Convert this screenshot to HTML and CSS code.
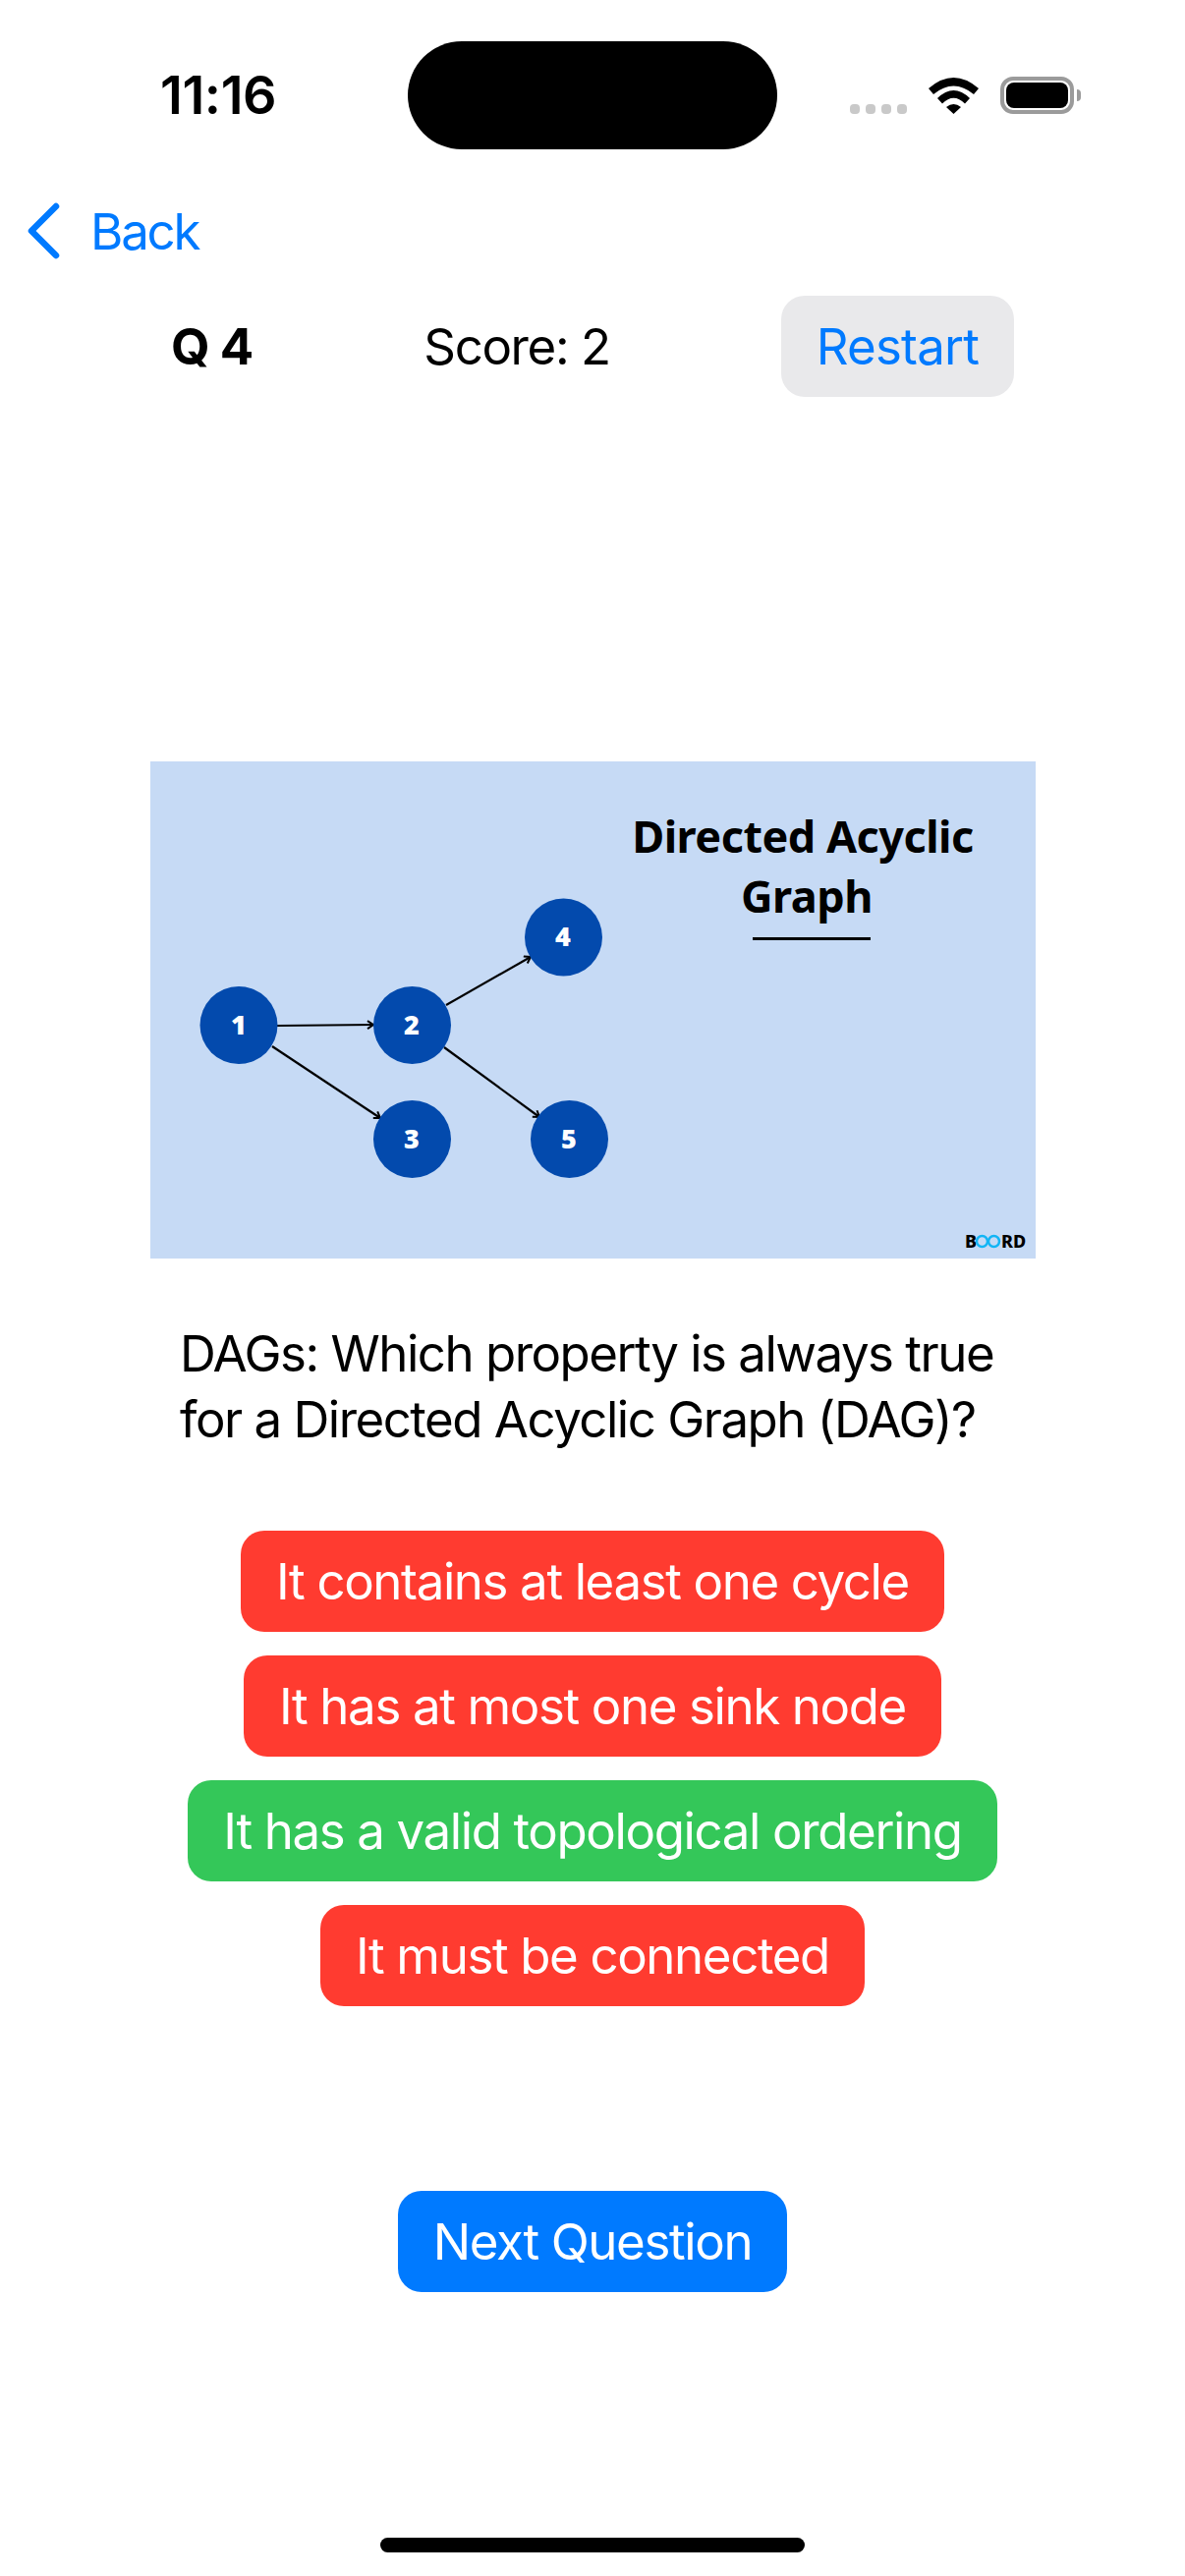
FILE: index.html
```html
<!DOCTYPE html>
<html lang="en">
<head>
<meta charset="utf-8">
<title>Quiz</title>
<link rel="stylesheet" href="styles.css">
</head>
<body>
<div class="page">
  <header class="status">
    <span class="time">11:16</span>
    <div class="island"></div>
    <div class="indicators">
      <div class="dots"><i></i><i></i><i></i><i></i></div>
      <svg class="wifi" width="51" height="37" viewBox="0 0 51 37"><path d="M0 11Q25.500 -11 51 11L46 17Q25.500 0 5 17Z"/><path d="M9 21Q25.500 5 42 21L37 26.500Q25.500 15 14 26.500Z"/><path d="M18 30Q25.500 24 33 30L25.500 37Z"/></svg>
      <div class="battery"><div class="charge"></div></div>
      <div class="cap"></div>
    </div>
  </header>
  <nav class="nav">
    <svg class="chevron" width="36" height="58" viewBox="0 0 36 58"><path d="M31 4L6 29L31 54"/></svg>
    <span class="back">Back</span>
  </nav>
  <section class="hud">
    <strong class="qnum">Q 4</strong>
    <span class="score">Score: 2</span>
    <button class="restart">Restart</button>
  </section>
  <svg class="figure" width="901" height="506" viewBox="153 775 901 506">
    <rect class="fig-bg" x="153" y="775" width="901" height="506"/>
    <defs><marker id="head" markerWidth="10" markerHeight="10" refX="8" refY="5" orient="auto" markerUnits="userSpaceOnUse"><path class="head" d="M2 1L8 5L2 9"/></marker></defs>
    <line class="edge" x1="282" y1="1044" x2="380" y2="1043" marker-end="url(#head)"/>
    <line class="edge" x1="277" y1="1065" x2="387" y2="1138" marker-end="url(#head)"/>
    <line class="edge" x1="454" y1="1023" x2="540" y2="974" marker-end="url(#head)"/>
    <line class="edge" x1="452" y1="1066" x2="549" y2="1137" marker-end="url(#head)"/>
    <circle class="node" cx="243" cy="1043.500" r="39.500"/><text class="num" x="243" y="1053">1</text>
    <circle class="node" cx="419.500" cy="1043.500" r="39.500"/><text class="num" x="419" y="1053">2</text>
    <circle class="node" cx="419.500" cy="1159.500" r="39.500"/><text class="num" x="419" y="1169">3</text>
    <circle class="node" cx="573.500" cy="954" r="39.500"/><text class="num" x="573" y="963">4</text>
    <circle class="node" cx="579.500" cy="1159.500" r="39.500"/><text class="num" x="579" y="1169">5</text>
    <text class="fig-title" x="817" y="868">Directed Acyclic</text>
    <text class="fig-title" x="821" y="929">Graph</text>
    <rect x="766" y="954" width="120" height="3"/>
    <text class="logo" x="982" y="1270">B</text>
    <circle class="loop" cx="999.500" cy="1263.500" r="5.500"/><circle class="loop" cx="1011.500" cy="1263.500" r="5.500"/>
    <text class="logo" x="1019" y="1270">RD</text>
  </svg>
  <p class="question">DAGs: Which property is always true for a Directed Acyclic Graph (DAG)?</p>
  <div class="answers">
    <button class="pill wrong">It contains at least one cycle</button>
    <button class="pill wrong">It has at most one sink node</button>
    <button class="pill right">It has a valid topological ordering</button>
    <button class="pill wrong">It must be connected</button>
  </div>
  <div class="next-row"><button class="pill next">Next Question</button></div>
  <div class="home"></div>
</div>
</body>
</html>
```
FILE: styles.css
```css
* { box-sizing: border-box; }
html, body { margin: 0; padding: 0; background: #fff; }
.page {
  position: relative;
  width: 1206px;
  height: 2622px;
  overflow: hidden;
  font-family: Inter, "Liberation Sans", sans-serif;
  color: #000;
}
.status {
  height: 190px;
  padding: 58px 0 0 163px;
  display: flex;
  align-items: flex-start;
}
.time { font-size: 54px; font-weight: 600; line-height: 78px; letter-spacing: -0.400px; }
.island {
  position: absolute;
  left: 415px;
  top: 42px;
  width: 376px;
  height: 110px;
  border-radius: 55px;
  background: #000;
}
.indicators {
  position: absolute;
  left: 865px;
  top: 78px;
  height: 38px;
  display: flex;
  align-items: flex-end;
}
.dots { display: flex; gap: 6px; margin-right: 22px; }
.dots i { width: 10px; height: 10px; border-radius: 4px; background: #c9c9c9; }
.wifi { display: block; fill: #000; margin-right: 22px; }
.battery {
  width: 75px;
  height: 38px;
  border: 4px solid #9b9b9b;
  border-radius: 13px;
  padding: 2px;
}
.charge { width: 100%; height: 100%; border-radius: 8px; background: #000; }
.cap { width: 4px; height: 12px; margin: 0 0 13px 3px; border-radius: 0 4px 4px 0; background: #9b9b9b; }
.nav { height: 90px; display: flex; align-items: center; padding-left: 26px; }
.chevron { display: block; fill: none; stroke: #007aff; stroke-width: 6.500; stroke-linecap: round; stroke-linejoin: round; }
.back { margin-left: 30px; font-size: 51px; color: #007aff; letter-spacing: -2.200px; }
.hud {
  margin-top: 21px;
  height: 103px;
  padding: 0 174px 0 174px;
  display: flex;
  align-items: center;
  justify-content: space-between;
  font-size: 51px;
}
.qnum { font-weight: 700; letter-spacing: -1px; }
.score { letter-spacing: -1.400px; }
.restart {
  width: 237px;
  height: 103px;
  border: 0;
  border-radius: 24px;
  background: #e9e9eb;
  color: #007aff;
  font: inherit;
  letter-spacing: -0.800px;
  padding: 0 0 0 0;
}
.figure { display: block; margin: 371px 0 0 153px; fill: #000; }
.fig-bg { fill: #c6daf5; }
.edge { stroke: #000; stroke-width: 2.200; }
.head { fill: none; stroke: #000; stroke-width: 2; }
.node { fill: #034aad; }
.num { fill: #fff; font: 800 27px "Open Sans", sans-serif; text-anchor: middle; }
.fig-title { font: 700 45px "Noto Sans", sans-serif; text-anchor: middle; letter-spacing: -0.500px; }
.logo { font: 800 18px "Noto Sans", sans-serif; }
.loop { fill: none; stroke: #12b5f5; stroke-width: 2.500; }
.question {
  margin: 63px 0 0 183px;
  width: 850px;
  font-size: 51px;
  line-height: 67px;
  letter-spacing: -1.500px;
}
.answers { margin-top: 80px; display: flex; flex-direction: column; align-items: center; gap: 24px; }
.pill {
  height: 103px;
  padding: 0 36px;
  border: 0;
  border-radius: 24px;
  color: #fff;
  font: 400 51px Inter, "Liberation Sans", sans-serif;
  letter-spacing: -1.380px;
}
.wrong { background: #ff3b30; }
.right { background: #34c759; }
.next { background: #007aff; }
.next-row { margin-top: 188px; display: flex; justify-content: center; }
.home { margin: 250px auto 0; width: 432px; height: 15px; border-radius: 8px; background: #000; }
```
